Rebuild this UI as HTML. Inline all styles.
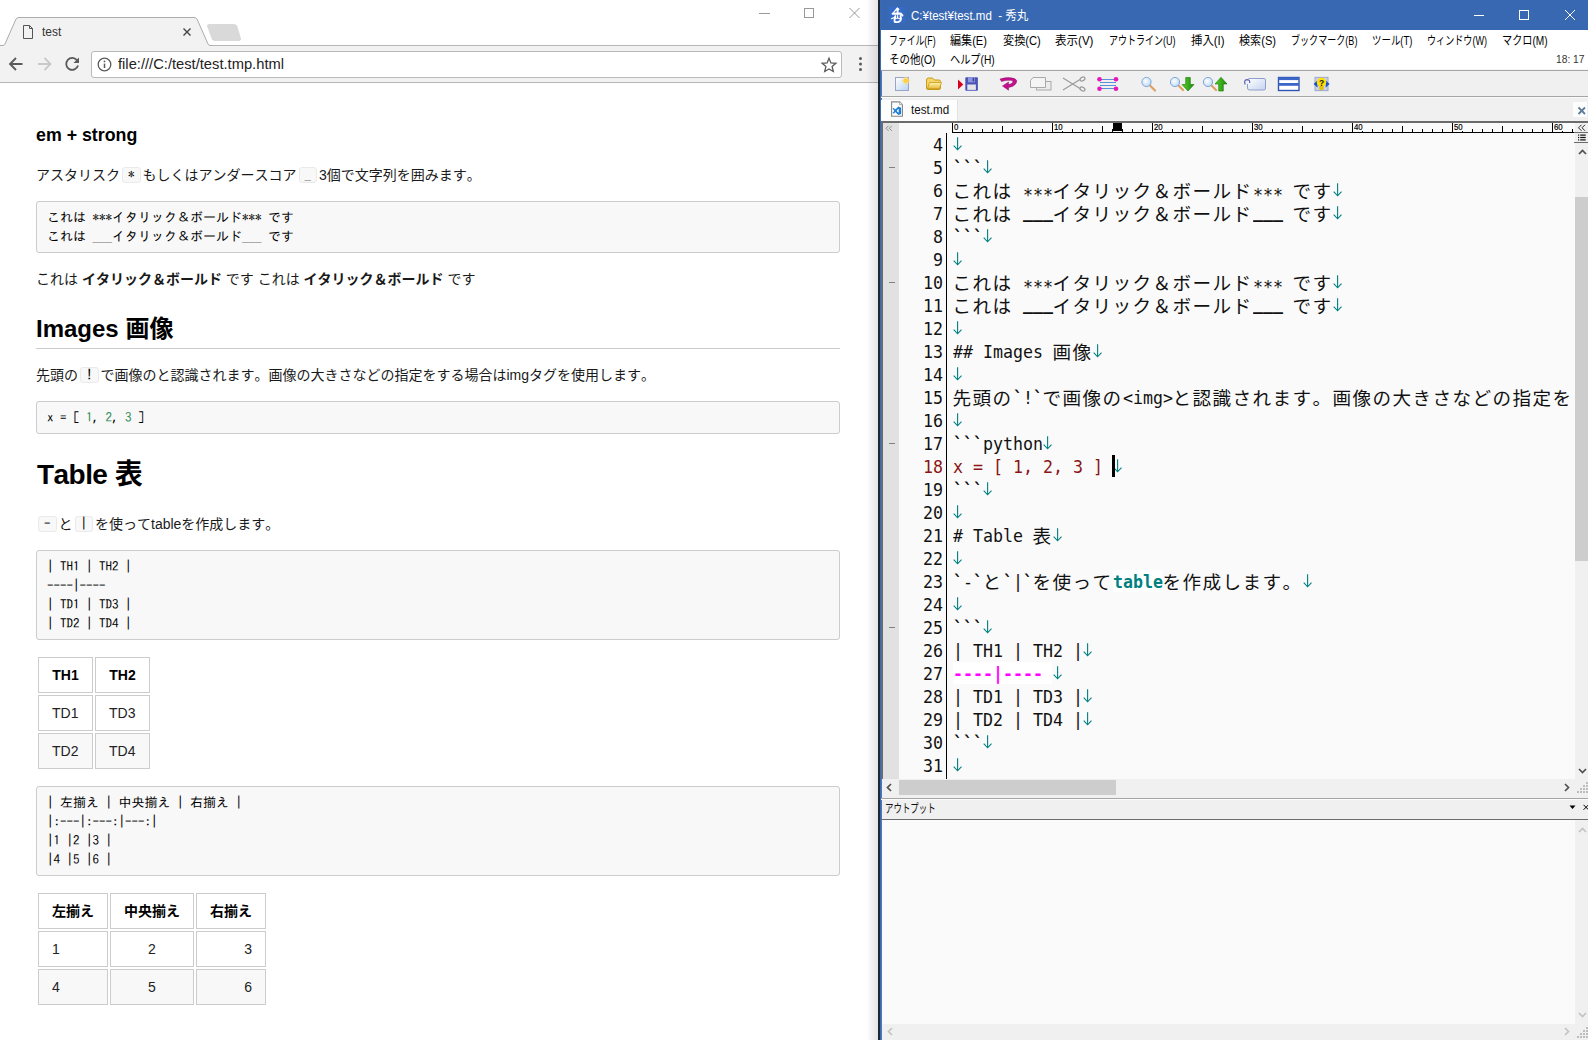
<!DOCTYPE html><html lang="ja"><head><meta charset="utf-8"><title>test</title><style>
*{box-sizing:border-box;margin:0;padding:0}
html,body{width:1588px;height:1040px;overflow:hidden;background:#fff}
body{position:relative;font-family:"Liberation Sans","Noto Sans CJK JP",sans-serif;font-kerning:none;color:#000}
.abs{position:absolute}
.fit{position:absolute;white-space:pre;transform-origin:0 50%}
#chrome{position:absolute;left:0;top:0;width:878px;height:1040px;background:#fff;overflow:hidden}
#tabstrip{position:absolute;left:0;top:0;width:878px;height:46px;background:#fff}
#toolbar{position:absolute;left:0;top:46px;width:878px;height:37px;background:#f2f2f2;border-bottom:1px solid #b6b6b6}
#url{position:absolute;left:91px;top:5px;width:751px;height:27px;background:#fff;border:1px solid #b9b9b9;border-radius:3px}
#page{position:absolute;left:0;top:83px;width:878px;height:957px;background:#fff;font-size:14px;color:#222}
#page .p{position:absolute;left:36px;white-space:nowrap;font-size:14px;line-height:22px;color:#1a1a1a}
#page .h{position:absolute;left:36px;white-space:nowrap;font-weight:bold;color:#000}
#page pre{position:absolute;left:36px;width:804px;background:#f8f8f8;border:1px solid #ccc;border-radius:3px;padding:6px 10px;font-family:"IPAGothic","Noto Sans CJK JP",monospace;font-size:13px;line-height:19px;color:#000;white-space:pre}
#page code{display:inline-block;font-family:"IPAGothic","Noto Sans CJK JP",monospace;font-size:13px;line-height:14px;height:16px;margin:0 2px;padding:0 5px;border:1px solid #eaeaea;background:#f8f8f8;border-radius:3px;vertical-align:1px;color:#000}
#page table{position:absolute;border-collapse:separate;border-spacing:2px;font-size:14px}
#page td,#page th{border:1px solid #ccc;height:36px;padding:0 13px;color:#222;white-space:nowrap}
#page th{font-weight:bold;color:#000}
#page th.j{padding-bottom:2px}
#page tr.alt td{background:#f8f8f8}
.n1{color:#2e8b57}
#hm{position:absolute;left:878px;top:0;width:710px;height:1040px;background:#f0f0f0;overflow:hidden}
#title{position:absolute;left:3px;top:0;width:707px;height:30px;background:#3768b1;color:#fff}
#menu{position:absolute;left:3px;top:30px;width:707px;height:40px;background:#fff;color:#000}
#edtext{position:absolute;overflow:hidden;background:#fafafa}
.ln{position:absolute;height:23px;line-height:23px;white-space:pre;color:#111}
.ln span{position:absolute;top:0;white-space:pre}
.ln .a,.num{font-family:"DejaVu Sans Mono",monospace;font-size:18px}
.ln .a{transform:scaleX(0.9227);transform-origin:0 50%}
.ln .j{font-family:"Noto Sans CJK JP",sans-serif;font-size:18.6px;letter-spacing:1.4px;top:-1px;margin-left:-0.5px}
.ln .ast{position:relative;top:4px}
.ln .us{position:relative;top:-2px;font-weight:bold}
.ln .bt{position:relative;top:0;font-weight:bold}
.num{position:absolute;height:23px;line-height:23px;transform:scaleX(0.9227);transform-origin:100% 50%;text-align:right;color:#111;white-space:pre}
.rl{position:absolute;top:-0.7px;font:9.8px/10px "Liberation Sans",sans-serif;color:#000;transform:scaleX(0.8);transform-origin:0 50%;-webkit-text-stroke:0.2px #000}
</style></head><body>
<div id="chrome">
<div id="tabstrip">
<svg class="abs" style="left:0;top:0" width="878" height="46" viewBox="0 0 878 46">
<path d="M0 45.5H878" stroke="#b6b6b6" stroke-width="1" fill="none"/>
<path d="M2.5 46 L4 45 L16 19 Q17 17.5 19 17.5 L194 17.5 Q196 17.5 197 19 L209 45 L210.5 46 Z" fill="#f2f2f2" stroke="none"/>
<path d="M0 45.5 L3 45.5 Q4.5 45 5 44 L16 19 Q17 17.5 19 17.5 L194 17.5 Q196 17.5 197 19 L208 44 Q208.5 45 210 45.5 L213 45.5" fill="none" stroke="#adadad" stroke-width="1"/>
<path d="M207.5 26 Q207 24.5 209 24.5 L234 24.5 Q236 24.5 236.8 26 L240.5 38.5 Q241 40.5 239 40.5 L215 40.5 Q213 40.5 212.2 39 Z" fill="#d9d9d9" stroke="#cfcfcf" stroke-width="0.6"/>
<path d="M23.5 25.5 H29.5 L32.5 28.5 V38.5 H23.5 Z M29.5 25.5 V28.5 H32.5" fill="none" stroke="#555" stroke-width="1"/>
<path d="M183.5 28.5 L190.5 35.5 M190.5 28.5 L183.5 35.5" stroke="#444" stroke-width="1.4" fill="none"/>
<path d="M759 13.5 H770" stroke="#999" stroke-width="1"/>
<rect x="804.5" y="8.5" width="9" height="9" fill="none" stroke="#999" stroke-width="1"/>
<path d="M849.5 8 L859.5 18 M859.5 8 L849.5 18" stroke="#999" stroke-width="1" fill="none"/>
</svg>
<span class="fit" style="left:42.2px;top:24.0px;font:12.5px 'Liberation Sans',sans-serif;line-height:16px;transform:scaleX(0.9575);color:#333;">test</span>
</div>
<div id="toolbar">
<svg class="abs" style="left:0;top:-1px" width="878" height="37" viewBox="0 0 878 37">
<g fill="none" stroke="#5a5a5a" stroke-width="1.8">
<path d="M22.5 19 H10.5 M16 13 L10 19 L16 25"/>
<path d="M38 19 H50 M44.5 13 L50.5 19 L44.5 25" stroke="#c9c9c9"/>
<path d="M77.2 15.5 A6 6 0 1 0 78 20.5"/>
</g>
<path d="M79 12.5 V18 H73.5 Z" fill="#5a5a5a"/>
</svg>
<div id="url">
<svg class="abs" style="left:4px;top:4px" width="18" height="18" viewBox="0 0 18 18"><circle cx="8.5" cy="8.5" r="6.3" fill="none" stroke="#5a5a5a" stroke-width="1.3"/><path d="M8.5 7.6 V12" stroke="#5a5a5a" stroke-width="1.5"/><circle cx="8.5" cy="5.4" r="0.9" fill="#5a5a5a"/></svg>
<span class="fit" style="left:25.6px;top:3.0px;font:14.5px 'Liberation Sans',sans-serif;line-height:19px;transform:scaleX(1.0148);color:#222;">file:///C:/test/test.tmp.html</span>
<svg class="abs" style="left:727px;top:3px" width="20" height="20" viewBox="0 0 20 20"><path d="M10 3.2 L11.9 7.9 L16.9 8.3 L13.1 11.6 L14.3 16.5 L10 13.9 L5.7 16.5 L6.9 11.6 L3.1 8.3 L8.1 7.9 Z" fill="none" stroke="#5a5a5a" stroke-width="1.3" stroke-linejoin="miter"/></svg>
</div>
<svg class="abs" style="left:852px;top:7px" width="16" height="22" viewBox="0 0 16 22"><circle cx="8.5" cy="5.5" r="1.5" fill="#5a5a5a"/><circle cx="8.5" cy="11" r="1.5" fill="#5a5a5a"/><circle cx="8.5" cy="16.5" r="1.5" fill="#5a5a5a"/></svg>
</div>
<div id="page">
<div class="h" style="top:40px;font-size:17.8px;line-height:24px">em + strong</div>
<div class="p" style="top:81px">アスタリスク<code>*</code>もしくはアンダースコア<code>_</code>3個で文字列を囲みます。</div>
<pre style="top:118px;height:52px">これは ***イタリック＆ボールド*** です
これは ___イタリック＆ボールド___ です</pre>
<div class="p" style="top:185px">これは <b>イタリック＆ボールド</b> です これは <b>イタリック＆ボールド</b> です</div>
<div class="h" style="top:229px;font-size:24px;line-height:34px;width:804px;border-bottom:1px solid #ccc;height:37px">Images 画像</div>
<div class="p" style="top:281px">先頭の<code>!</code>で画像のと認識されます。画像の大きさなどの指定をする場合はimgタグを使用します。</div>
<pre style="top:318px;height:33px">x = [ <span class="n1">1</span>, <span class="n1">2</span>, <span class="n1">3</span> ]</pre>
<div class="h" style="top:372px;font-size:28px;line-height:40px;left:37px"><span style="letter-spacing:-0.55px">Table </span>表</div>
<div class="p" style="top:430px"><code>-</code>と<code>|</code>を使ってtableを作成します。</div>
<pre style="top:467px;height:90px">| TH1 | TH2 |
----|----
| TD1 | TD3 |
| TD2 | TD4 |</pre>
<table style="left:36px;top:572px"><tr><th style="width:55px">TH1</th><th style="width:55px">TH2</th></tr><tr><td>TD1</td><td>TD3</td></tr><tr class="alt"><td>TD2</td><td>TD4</td></tr></table>
<pre style="top:703px;height:90px">| 左揃え | 中央揃え | 右揃え |
|:---|:---:|---:|
|1 |2 |3 |
|4 |5 |6 |</pre>
<table style="left:36px;top:808px"><tr><th class="j" style="width:70px">左揃え</th><th class="j" style="width:84px">中央揃え</th><th class="j" style="width:70px">右揃え</th></tr><tr><td>1</td><td style="text-align:center">2</td><td style="text-align:right">3</td></tr><tr class="alt"><td>4</td><td style="text-align:center">5</td><td style="text-align:right">6</td></tr></table>
</div>
<div class="abs" style="left:866px;top:0;width:12px;height:1040px;background:linear-gradient(to right,rgba(0,0,0,0),rgba(0,0,0,0.10))"></div>
</div>
<div id="hm">
<div class="abs" style="left:0;top:0;width:2px;height:1040px;background:#1c2836"></div>
<div class="abs" style="left:2px;top:0;width:1px;height:1040px;background:#3a6ab4"></div><div class="abs" style="left:3px;top:0;width:1px;height:1040px;background:#4f78b8"></div>
<div id="title">
<svg class="abs" style="left:0;top:0" width="707" height="30" viewBox="0 0 707 30">
<rect x="7.9" y="7" width="16" height="16" fill="#356bc8"/>
<g stroke="#fff" fill="none" stroke-linecap="round" stroke-linejoin="round"><path d="M16.4 8.2 L17.6 9.4 L15.6 9.8 Z" stroke-width="1.6" fill="#fff"/><path d="M15.6 9 L12 13.4" stroke-width="1.2"/><path d="M11.6 13.8 L19.6 13.4 L21.4 15.4" stroke-width="2"/><path d="M16.6 9 V13.5" stroke-width="1.8"/><path d="M16.6 15.5 V18" stroke-width="1.1"/><path d="M10.6 18.6 Q13 18 14.6 16.4" stroke-width="1.1"/><path d="M14.4 16 Q13.2 19 13.6 21.6" stroke-width="1.8"/><path d="M14 22 Q17.5 22.6 19.4 20.6 Q20.4 18.6 19.6 16" stroke-width="1.9"/><path d="M14.2 18.6 Q16.8 17.4 18.6 18.6" stroke-width="1.2"/></g>
<g stroke="#fff" stroke-width="1" fill="none"><path d="M593 15.5 H603"/><rect x="638.5" y="10.5" width="9" height="9"/><path d="M684 10 L694 20 M694 10 L684 20"/></g>
</svg>
<span class="fit" style="left:29.5px;top:8.0px;font:12.4px 'Liberation Sans','Noto Sans CJK JP',sans-serif;line-height:16px;transform:scaleX(0.9316);color:#fff;">C:¥test¥test.md  - 秀丸</span>
</div>
<div id="menu">
<span class="fit" style="left:7.7px;top:3.0px;font:12px 'Liberation Sans','Noto Sans CJK JP',sans-serif;line-height:16px;transform:scaleX(0.7358);">ファイル(F)</span>
<span class="fit" style="left:69.4px;top:3.0px;font:12px 'Liberation Sans','Noto Sans CJK JP',sans-serif;line-height:16px;transform:scaleX(0.9225);">編集(E)</span>
<span class="fit" style="left:121.7px;top:3.0px;font:12px 'Liberation Sans','Noto Sans CJK JP',sans-serif;line-height:16px;transform:scaleX(0.9294);">変換(C)</span>
<span class="fit" style="left:174.0px;top:3.0px;font:12px 'Liberation Sans','Noto Sans CJK JP',sans-serif;line-height:16px;transform:scaleX(0.9600);">表示(V)</span>
<span class="fit" style="left:227.8px;top:3.0px;font:12px 'Liberation Sans','Noto Sans CJK JP',sans-serif;line-height:16px;transform:scaleX(0.7511);">アウトライン(U)</span>
<span class="fit" style="left:309.8px;top:3.0px;font:12px 'Liberation Sans','Noto Sans CJK JP',sans-serif;line-height:16px;transform:scaleX(0.9483);">挿入(I)</span>
<span class="fit" style="left:358.3px;top:3.0px;font:12px 'Liberation Sans','Noto Sans CJK JP',sans-serif;line-height:16px;transform:scaleX(0.9250);">検索(S)</span>
<span class="fit" style="left:410.2px;top:3.0px;font:12px 'Liberation Sans','Noto Sans CJK JP',sans-serif;line-height:16px;transform:scaleX(0.7545);">ブックマーク(B)</span>
<span class="fit" style="left:491.1px;top:3.0px;font:12px 'Liberation Sans','Noto Sans CJK JP',sans-serif;line-height:16px;transform:scaleX(0.7871);">ツール(T)</span>
<span class="fit" style="left:546.4px;top:3.0px;font:12px 'Liberation Sans','Noto Sans CJK JP',sans-serif;line-height:16px;transform:scaleX(0.7576);">ウィンドウ(W)</span>
<span class="fit" style="left:621.0px;top:3.0px;font:12px 'Liberation Sans','Noto Sans CJK JP',sans-serif;line-height:16px;transform:scaleX(0.8444);">マクロ(M)</span>
<span class="fit" style="left:7.7px;top:21.5px;font:12px 'Liberation Sans','Noto Sans CJK JP',sans-serif;line-height:16px;transform:scaleX(0.8738);">その他(O)</span>
<span class="fit" style="left:69.4px;top:21.5px;font:12px 'Liberation Sans','Noto Sans CJK JP',sans-serif;line-height:16px;transform:scaleX(0.8487);">ヘルプ(H)</span>
<span class="fit" style="left:675.4px;top:21.0px;font:11px 'Liberation Sans',sans-serif;line-height:16px;transform:scaleX(0.9316);color:#333;">18: 17</span>
</div>
<div class="abs" style="left:3px;top:69px;width:707px;height:1px;background:#f6f6f6"></div>
<div class="abs" style="left:3px;top:70px;width:707px;height:1px;background:#a5a5a5"></div>
<div class="abs" style="left:3px;top:96px;width:707px;height:1px;background:#a5a5a5"></div>
<div class="abs" style="left:3px;top:97px;width:707px;height:1px;background:#fafafa"></div>
<svg class="abs" style="left:3px;top:71px" width="707" height="25" viewBox="881 71 707 25">
<defs>
<linearGradient id="gpage" x1="0" y1="0" x2="1" y2="1"><stop offset="0" stop-color="#ffffff"/><stop offset="1" stop-color="#b9d3f3"/></linearGradient>
<linearGradient id="gfold" x1="0" y1="0" x2="0" y2="1"><stop offset="0" stop-color="#fff3b0"/><stop offset="1" stop-color="#e9bc3a"/></linearGradient>
<radialGradient id="glens" cx="0.4" cy="0.4" r="0.7"><stop offset="0" stop-color="#ffffff"/><stop offset="1" stop-color="#b5d4f5"/></radialGradient>
<linearGradient id="ggreen" x1="0" y1="0" x2="1" y2="0"><stop offset="0" stop-color="#5fd02a"/><stop offset="1" stop-color="#178a0a"/></linearGradient>
<linearGradient id="gtag" x1="0" y1="0" x2="1" y2="1"><stop offset="0" stop-color="#ffffff"/><stop offset="1" stop-color="#c3d3f0"/></linearGradient>
</defs>
<!-- 1 new doc -->
<rect x="895.5" y="77.5" width="13" height="13" fill="url(#gpage)" stroke="#9aa3c8" stroke-width="1"/>
<circle cx="905.8" cy="80.6" r="3.6" fill="#ffe27a" opacity="0.55"/><circle cx="905.8" cy="80.6" r="2.2" fill="#ffc92e"/>
<path d="M905.8 76.8 V84.4 M902 80.6 H909.6" stroke="#ffd450" stroke-width="0.8" fill="none" opacity="0.8"/>
<!-- 2 folder -->
<path d="M926.5 80 Q926.5 78 928.5 78 H932.5 L934.5 80 H939 Q940.5 80 940.5 81.5 V88 Q940.5 89.5 939 89.5 H928 Q926.5 89.5 926.5 88 Z" fill="#f5d56a" stroke="#c89a1c" stroke-width="1"/>
<path d="M927.5 88.5 L929.5 82.5 H941.5 L939.5 88.5 Z" fill="url(#gfold)" stroke="#c89a1c" stroke-width="0.8"/>
<!-- 3 save -->
<path d="M958 79.5 L963.3 84.5 L958 89.5 Z" fill="#d8001c"/>
<rect x="965.3" y="77.3" width="12.6" height="13.4" rx="1" fill="#4b52b8"/>
<rect x="968" y="77.3" width="7" height="5" fill="#8f97dc"/><rect x="972.6" y="78" width="1.6" height="3.4" fill="#3a409c"/>
<rect x="967.3" y="84.5" width="8.6" height="5.4" fill="#e4e4e8"/>
<!-- 4 redo magenta -->
<path d="M1000 79 Q1008 76.5 1014.5 78.5 Q1018 80 1016 83.5 Q1013.5 87 1008.5 87.5 L1008.5 90.2 L1002.5 86 L1008.5 82 L1008.5 84.6 Q1011.5 84.2 1012.8 82.3 Q1013.5 80.6 1011 80.3 Q1006 79.8 1001.5 81.5 Z" fill="#c4108e" stroke="#8e0a66" stroke-width="0.5"/>
<!-- 5 copy pages -->
<rect x="1036.5" y="81.5" width="14.5" height="8.5" fill="#ececec" stroke="#a9a9a9" stroke-width="1"/>
<path d="M1030.5 80.5 L1033 77.5 H1045.5 V87.5 H1030.5 Z" fill="#f4f4f4" stroke="#a9a9a9" stroke-width="1"/>
<!-- 6 scissors -->
<g fill="none" stroke="#9a9a9a" stroke-width="1.2"><path d="M1063 78 L1080 88.5 M1063 90 L1080 79.5"/><ellipse cx="1082.5" cy="79" rx="2.6" ry="1.8" transform="rotate(-30 1082.5 79)"/><ellipse cx="1082.5" cy="89" rx="2.6" ry="1.8" transform="rotate(30 1082.5 89)"/></g>
<!-- 7 pink dots -->
<g stroke="#5b8fd6" stroke-width="1"><path d="M1100 79.5 H1116 M1100 82.5 H1116 M1100 85.5 H1116 M1100 88.5 H1116"/></g>
<g fill="#e815b8"><circle cx="1099.5" cy="79.3" r="2.3"/><circle cx="1116" cy="79.3" r="2.3"/><circle cx="1099.5" cy="88.7" r="2.3"/><circle cx="1116" cy="88.7" r="2.3"/></g>
<!-- 8 magnifier -->
<g id="mag1"><path d="M1150 85.5 L1155 90.5" stroke="#e0a060" stroke-width="2.2" stroke-linecap="round"/><circle cx="1146.5" cy="82" r="4.6" fill="url(#glens)" stroke="#7fa6d9" stroke-width="1"/></g>
<!-- 9 magnifier + down -->
<path d="M1178.5 85.5 L1183 90" stroke="#e0a060" stroke-width="2.2" stroke-linecap="round"/><circle cx="1175" cy="82" r="4.6" fill="url(#glens)" stroke="#7fa6d9" stroke-width="1"/>
<path d="M1185.7 77.5 H1190.3 V84.5 H1194 L1188 91 L1182 84.5 H1185.7 Z" fill="url(#ggreen)" stroke="#137506" stroke-width="0.6"/>
<!-- 10 magnifier + up -->
<path d="M1211.5 85.5 L1216 90" stroke="#e0a060" stroke-width="2.2" stroke-linecap="round"/><circle cx="1208" cy="82" r="4.6" fill="url(#glens)" stroke="#7fa6d9" stroke-width="1"/>
<path d="M1218.7 91 H1223.3 V84 H1227 L1221 77.3 L1215 84 H1218.7 Z" fill="url(#ggreen)" stroke="#137506" stroke-width="0.6"/>
<!-- 11 tag -->
<path d="M1248.5 78.5 H1264 Q1265.5 78.5 1265.5 80 V88 Q1265.5 90 1264 90 H1249.5 Q1247.5 90 1247.5 88 V84" fill="url(#gtag)" stroke="#8f9fcc" stroke-width="1"/>
<path d="M1245.2 84.5 Q1243.5 80 1247 79.6 Q1250.2 79.6 1249.6 83" fill="none" stroke="#5c63b8" stroke-width="1.2"/>
<!-- 12 split window -->
<rect x="1278.5" y="77.5" width="20.5" height="13" fill="#ffffff" stroke="#2f55b4" stroke-width="1.4"/>
<rect x="1278.5" y="77.5" width="20.5" height="2.6" fill="#3c66c8"/><rect x="1278.5" y="83" width="20.5" height="2.8" fill="#3c66c8"/>
<!-- 13 help -->
<rect x="1315" y="77.3" width="13" height="13.4" fill="#c9d3ea" stroke="#8d9ac4" stroke-width="0.8"/>
<path d="M1313.6 84 L1317.5 80.4 V87.6 Z M1329.6 84 L1325.7 80.4 V87.6 Z" fill="#1a4fd0"/>
<circle cx="1321.5" cy="82.4" r="4.7" fill="#ffe000"/><text x="1321.5" y="86" font-family="Liberation Sans,sans-serif" font-weight="bold" font-size="8.5" text-anchor="middle" fill="#222">?</text><rect x="1319.3" y="86" width="4.4" height="4" rx="1" fill="#e2c200"/>
</svg>

<div class="abs" style="left:3px;top:100px;width:77px;height:21px;background:#fdfdfd;border-right:1px solid #e2e2e2"></div>
<svg class="abs" style="left:12px;top:100px" width="16" height="20" viewBox="0 0 16 20"><path d="M1.6 1.9 H9.6 L12.4 4.7 V16.3 H1.6 Z" fill="#fff" stroke="#858585" stroke-width="1.1"/><path d="M9.6 1.9 V4.7 H12.4" fill="#f4f4f4" stroke="#9a9a9a" stroke-width="0.8"/><path d="M8.4 6.5 L11.1 7.7 V13.9 L8.4 15.1 L4.0 10.8 Z M8.7 8.8 L6.3 10.8 L8.7 12.8 Z" fill="#1e7fd6" fill-rule="evenodd"/><path d="M3.5 8.8 L6 11 M3.5 12.8 L6 10.6" stroke="#1e7fd6" stroke-width="1.5" stroke-linecap="round" fill="none"/></svg>
<span class="fit" style="left:33.4px;top:102.0px;font:12px 'Liberation Sans','Noto Sans CJK JP',sans-serif;line-height:16px;transform:scaleX(0.9680);color:#111;">test.md</span>
<div class="abs" style="left:695px;top:102px;width:14px;height:15px;background:#fdfdfd"></div>
<svg class="abs" style="left:699px;top:106px" width="10" height="10" viewBox="0 0 10 10"><path d="M1.5 1.5 L8 8 M8 1.5 L1.5 8" stroke="#5f7d99" stroke-width="1.8" fill="none"/></svg>
<div class="abs" style="left:3px;top:121px;width:707px;height:2px;background:#6b6b6b"></div>
<div class="abs" style="left:3px;top:121px;width:1px;height:658px;background:#5f6f8a"></div><div class="abs" style="left:4px;top:121px;width:1px;height:658px;background:#6b6b6b"></div>
<div id="edtext" style="left:5px;top:123px;width:692px;height:656px">
<div class="abs" style="left:0;top:0;width:16px;height:656px;background:#e1e1e1"></div>
<div class="abs" style="left:63px;top:10px;width:1px;height:650px;background:#000"></div>
<svg class="abs" style="left:1.5px;top:1.5px" width="10" height="8" viewBox="0 0 10 8"><path d="M3.5 0.8 L1 3.3 L3.5 5.8 M6.8 0.8 L4.3 3.3 L6.8 5.8" fill="none" stroke="#777" stroke-width="0.8"/></svg>
<svg class="abs" style="left:68px;top:0" width="624" height="10" viewBox="0 0 624 10" shape-rendering="crispEdges"><rect x="1" y="8.7" width="623" height="1.3" fill="#000"/><rect x="1" y="0" width="1" height="10" fill="#000"/><rect x="11" y="6" width="1" height="3" fill="#000"/><rect x="21" y="6" width="1" height="3" fill="#000"/><rect x="31" y="6" width="1" height="3" fill="#000"/><rect x="41" y="6" width="1" height="3" fill="#000"/><rect x="51" y="3" width="1" height="6" fill="#000"/><rect x="61" y="6" width="1" height="3" fill="#000"/><rect x="71" y="6" width="1" height="3" fill="#000"/><rect x="81" y="6" width="1" height="3" fill="#000"/><rect x="91" y="6" width="1" height="3" fill="#000"/><rect x="101" y="0" width="1" height="9" fill="#000"/><rect x="111" y="6" width="1" height="3" fill="#000"/><rect x="121" y="6" width="1" height="3" fill="#000"/><rect x="131" y="6" width="1" height="3" fill="#000"/><rect x="141" y="6" width="1" height="3" fill="#000"/><rect x="151" y="3" width="1" height="6" fill="#000"/><rect x="161" y="6" width="1" height="3" fill="#000"/><rect x="171" y="6" width="1" height="3" fill="#000"/><rect x="181" y="6" width="1" height="3" fill="#000"/><rect x="191" y="6" width="1" height="3" fill="#000"/><rect x="201" y="0" width="1" height="9" fill="#000"/><rect x="211" y="6" width="1" height="3" fill="#000"/><rect x="221" y="6" width="1" height="3" fill="#000"/><rect x="231" y="6" width="1" height="3" fill="#000"/><rect x="241" y="6" width="1" height="3" fill="#000"/><rect x="251" y="3" width="1" height="6" fill="#000"/><rect x="261" y="6" width="1" height="3" fill="#000"/><rect x="271" y="6" width="1" height="3" fill="#000"/><rect x="281" y="6" width="1" height="3" fill="#000"/><rect x="291" y="6" width="1" height="3" fill="#000"/><rect x="301" y="0" width="1" height="9" fill="#000"/><rect x="311" y="6" width="1" height="3" fill="#000"/><rect x="321" y="6" width="1" height="3" fill="#000"/><rect x="331" y="6" width="1" height="3" fill="#000"/><rect x="341" y="6" width="1" height="3" fill="#000"/><rect x="351" y="3" width="1" height="6" fill="#000"/><rect x="361" y="6" width="1" height="3" fill="#000"/><rect x="371" y="6" width="1" height="3" fill="#000"/><rect x="381" y="6" width="1" height="3" fill="#000"/><rect x="391" y="6" width="1" height="3" fill="#000"/><rect x="401" y="0" width="1" height="9" fill="#000"/><rect x="411" y="6" width="1" height="3" fill="#000"/><rect x="421" y="6" width="1" height="3" fill="#000"/><rect x="431" y="6" width="1" height="3" fill="#000"/><rect x="441" y="6" width="1" height="3" fill="#000"/><rect x="451" y="3" width="1" height="6" fill="#000"/><rect x="461" y="6" width="1" height="3" fill="#000"/><rect x="471" y="6" width="1" height="3" fill="#000"/><rect x="481" y="6" width="1" height="3" fill="#000"/><rect x="491" y="6" width="1" height="3" fill="#000"/><rect x="501" y="0" width="1" height="9" fill="#000"/><rect x="511" y="6" width="1" height="3" fill="#000"/><rect x="521" y="6" width="1" height="3" fill="#000"/><rect x="531" y="6" width="1" height="3" fill="#000"/><rect x="541" y="6" width="1" height="3" fill="#000"/><rect x="551" y="3" width="1" height="6" fill="#000"/><rect x="561" y="6" width="1" height="3" fill="#000"/><rect x="571" y="6" width="1" height="3" fill="#000"/><rect x="581" y="6" width="1" height="3" fill="#000"/><rect x="591" y="6" width="1" height="3" fill="#000"/><rect x="601" y="0" width="1" height="9" fill="#000"/><rect x="611" y="6" width="1" height="3" fill="#000"/><rect x="621" y="6" width="1" height="3" fill="#000"/></svg>
<span class="rl" style="left:70.7px">0</span>
<div class="abs" style="left:170px;top:0;width:10px;height:8px;background:#fafafa"></div>
<span class="rl" style="left:170.7px">10</span>
<div class="abs" style="left:270px;top:0;width:10px;height:8px;background:#fafafa"></div>
<span class="rl" style="left:270.7px">20</span>
<div class="abs" style="left:370px;top:0;width:10px;height:8px;background:#fafafa"></div>
<span class="rl" style="left:370.7px">30</span>
<div class="abs" style="left:470px;top:0;width:10px;height:8px;background:#fafafa"></div>
<span class="rl" style="left:470.7px">40</span>
<div class="abs" style="left:570px;top:0;width:10px;height:8px;background:#fafafa"></div>
<span class="rl" style="left:570.7px">50</span>
<div class="abs" style="left:670px;top:0;width:10px;height:8px;background:#fafafa"></div>
<span class="rl" style="left:670.7px">60</span>
<div class="abs" style="left:230px;top:0;width:9px;height:8px;background:#000"></div>
<div class="num" style="left:0px;top:10px;width:60px;color:#111">4</div>
<div class="ln" style="left:70px;top:10px;width:640px"><svg class="abs" style="left:0px;top:4px" width="10" height="14" viewBox="0 0 10 14"><path d="M4.6 0.3 V12.6 M0.7 8.6 L4.6 12.8 L8.5 8.6" fill="none" stroke="#008080" stroke-width="1.1"/></svg></div>
<div class="num" style="left:0px;top:33px;width:60px;color:#111">5</div>
<div class="abs" style="left:6px;top:44px;width:6px;height:1px;background:#808080"></div>
<div class="ln" style="left:70px;top:33px;width:640px"><span class="a" style="left:0px"><span class="bt">```</span></span><svg class="abs" style="left:30px;top:4px" width="10" height="14" viewBox="0 0 10 14"><path d="M4.6 0.3 V12.6 M0.7 8.6 L4.6 12.8 L8.5 8.6" fill="none" stroke="#008080" stroke-width="1.1"/></svg></div>
<div class="num" style="left:0px;top:56px;width:60px;color:#111">6</div>
<div class="ln" style="left:70px;top:56px;width:640px"><span class="j" style="left:0px">これは</span><span class="a" style="left:60px"> <span class="ast">***</span></span><span class="j" style="left:100px">イタリック＆ボールド</span><span class="a" style="left:300px"><span class="ast">***</span> </span><span class="j" style="left:340px">です</span><svg class="abs" style="left:380px;top:4px" width="10" height="14" viewBox="0 0 10 14"><path d="M4.6 0.3 V12.6 M0.7 8.6 L4.6 12.8 L8.5 8.6" fill="none" stroke="#008080" stroke-width="1.1"/></svg></div>
<div class="num" style="left:0px;top:79px;width:60px;color:#111">7</div>
<div class="ln" style="left:70px;top:79px;width:640px"><span class="j" style="left:0px">これは</span><span class="a" style="left:60px"> <span class="us">___</span></span><span class="j" style="left:100px">イタリック＆ボールド</span><span class="a" style="left:300px"><span class="us">___</span> </span><span class="j" style="left:340px">です</span><svg class="abs" style="left:380px;top:4px" width="10" height="14" viewBox="0 0 10 14"><path d="M4.6 0.3 V12.6 M0.7 8.6 L4.6 12.8 L8.5 8.6" fill="none" stroke="#008080" stroke-width="1.1"/></svg></div>
<div class="num" style="left:0px;top:102px;width:60px;color:#111">8</div>
<div class="ln" style="left:70px;top:102px;width:640px"><span class="a" style="left:0px"><span class="bt">```</span></span><svg class="abs" style="left:30px;top:4px" width="10" height="14" viewBox="0 0 10 14"><path d="M4.6 0.3 V12.6 M0.7 8.6 L4.6 12.8 L8.5 8.6" fill="none" stroke="#008080" stroke-width="1.1"/></svg></div>
<div class="num" style="left:0px;top:125px;width:60px;color:#111">9</div>
<div class="ln" style="left:70px;top:125px;width:640px"><svg class="abs" style="left:0px;top:4px" width="10" height="14" viewBox="0 0 10 14"><path d="M4.6 0.3 V12.6 M0.7 8.6 L4.6 12.8 L8.5 8.6" fill="none" stroke="#008080" stroke-width="1.1"/></svg></div>
<div class="num" style="left:0px;top:148px;width:60px;color:#111">10</div>
<div class="abs" style="left:6px;top:159px;width:6px;height:1px;background:#808080"></div>
<div class="ln" style="left:70px;top:148px;width:640px"><span class="j" style="left:0px">これは</span><span class="a" style="left:60px"> <span class="ast">***</span></span><span class="j" style="left:100px">イタリック＆ボールド</span><span class="a" style="left:300px"><span class="ast">***</span> </span><span class="j" style="left:340px">です</span><svg class="abs" style="left:380px;top:4px" width="10" height="14" viewBox="0 0 10 14"><path d="M4.6 0.3 V12.6 M0.7 8.6 L4.6 12.8 L8.5 8.6" fill="none" stroke="#008080" stroke-width="1.1"/></svg></div>
<div class="num" style="left:0px;top:171px;width:60px;color:#111">11</div>
<div class="ln" style="left:70px;top:171px;width:640px"><span class="j" style="left:0px">これは</span><span class="a" style="left:60px"> <span class="us">___</span></span><span class="j" style="left:100px">イタリック＆ボールド</span><span class="a" style="left:300px"><span class="us">___</span> </span><span class="j" style="left:340px">です</span><svg class="abs" style="left:380px;top:4px" width="10" height="14" viewBox="0 0 10 14"><path d="M4.6 0.3 V12.6 M0.7 8.6 L4.6 12.8 L8.5 8.6" fill="none" stroke="#008080" stroke-width="1.1"/></svg></div>
<div class="num" style="left:0px;top:194px;width:60px;color:#111">12</div>
<div class="ln" style="left:70px;top:194px;width:640px"><svg class="abs" style="left:0px;top:4px" width="10" height="14" viewBox="0 0 10 14"><path d="M4.6 0.3 V12.6 M0.7 8.6 L4.6 12.8 L8.5 8.6" fill="none" stroke="#008080" stroke-width="1.1"/></svg></div>
<div class="num" style="left:0px;top:217px;width:60px;color:#111">13</div>
<div class="ln" style="left:70px;top:217px;width:640px"><span class="a" style="left:0px">## Images </span><span class="j" style="left:100px">画像</span><svg class="abs" style="left:140px;top:4px" width="10" height="14" viewBox="0 0 10 14"><path d="M4.6 0.3 V12.6 M0.7 8.6 L4.6 12.8 L8.5 8.6" fill="none" stroke="#008080" stroke-width="1.1"/></svg></div>
<div class="num" style="left:0px;top:240px;width:60px;color:#111">14</div>
<div class="ln" style="left:70px;top:240px;width:640px"><svg class="abs" style="left:0px;top:4px" width="10" height="14" viewBox="0 0 10 14"><path d="M4.6 0.3 V12.6 M0.7 8.6 L4.6 12.8 L8.5 8.6" fill="none" stroke="#008080" stroke-width="1.1"/></svg></div>
<div class="num" style="left:0px;top:263px;width:60px;color:#111">15</div>
<div class="ln" style="left:70px;top:263px;width:640px"><span class="j" style="left:0px">先頭の</span><span class="a" style="left:60px"><span class="bt">`</span>!<span class="bt">`</span></span><span class="j" style="left:90px">で画像の</span><span class="a" style="left:170px">&lt;img&gt;</span><span class="j" style="left:220px">と認識されます。画像の大きさなどの指定を</span></div>
<div class="num" style="left:0px;top:286px;width:60px;color:#111">16</div>
<div class="ln" style="left:70px;top:286px;width:640px"><svg class="abs" style="left:0px;top:4px" width="10" height="14" viewBox="0 0 10 14"><path d="M4.6 0.3 V12.6 M0.7 8.6 L4.6 12.8 L8.5 8.6" fill="none" stroke="#008080" stroke-width="1.1"/></svg></div>
<div class="num" style="left:0px;top:309px;width:60px;color:#111">17</div>
<div class="abs" style="left:6px;top:320px;width:6px;height:1px;background:#808080"></div>
<div class="ln" style="left:70px;top:309px;width:640px"><span class="a" style="left:0px"><span class="bt">```</span>python</span><svg class="abs" style="left:90px;top:4px" width="10" height="14" viewBox="0 0 10 14"><path d="M4.6 0.3 V12.6 M0.7 8.6 L4.6 12.8 L8.5 8.6" fill="none" stroke="#008080" stroke-width="1.1"/></svg></div>
<div class="num" style="left:0px;top:332px;width:60px;color:#8b1414">18</div>
<div class="ln" style="left:70px;top:332px;width:640px;color:#8b1414"><span class="a" style="left:0px">x = [ 1, 2, 3 ] </span><svg class="abs" style="left:160px;top:4px" width="10" height="14" viewBox="0 0 10 14"><path d="M4.6 0.3 V12.6 M0.7 8.6 L4.6 12.8 L8.5 8.6" fill="none" stroke="#008080" stroke-width="1.1"/></svg></div>
<div class="num" style="left:0px;top:355px;width:60px;color:#111">19</div>
<div class="ln" style="left:70px;top:355px;width:640px"><span class="a" style="left:0px"><span class="bt">```</span></span><svg class="abs" style="left:30px;top:4px" width="10" height="14" viewBox="0 0 10 14"><path d="M4.6 0.3 V12.6 M0.7 8.6 L4.6 12.8 L8.5 8.6" fill="none" stroke="#008080" stroke-width="1.1"/></svg></div>
<div class="num" style="left:0px;top:378px;width:60px;color:#111">20</div>
<div class="ln" style="left:70px;top:378px;width:640px"><svg class="abs" style="left:0px;top:4px" width="10" height="14" viewBox="0 0 10 14"><path d="M4.6 0.3 V12.6 M0.7 8.6 L4.6 12.8 L8.5 8.6" fill="none" stroke="#008080" stroke-width="1.1"/></svg></div>
<div class="num" style="left:0px;top:401px;width:60px;color:#111">21</div>
<div class="ln" style="left:70px;top:401px;width:640px"><span class="a" style="left:0px"># Table </span><span class="j" style="left:80px">表</span><svg class="abs" style="left:100px;top:4px" width="10" height="14" viewBox="0 0 10 14"><path d="M4.6 0.3 V12.6 M0.7 8.6 L4.6 12.8 L8.5 8.6" fill="none" stroke="#008080" stroke-width="1.1"/></svg></div>
<div class="num" style="left:0px;top:424px;width:60px;color:#111">22</div>
<div class="ln" style="left:70px;top:424px;width:640px"><svg class="abs" style="left:0px;top:4px" width="10" height="14" viewBox="0 0 10 14"><path d="M4.6 0.3 V12.6 M0.7 8.6 L4.6 12.8 L8.5 8.6" fill="none" stroke="#008080" stroke-width="1.1"/></svg></div>
<div class="num" style="left:0px;top:447px;width:60px;color:#111">23</div>
<div class="ln" style="left:70px;top:447px;width:640px"><span class="a" style="left:0px"><span class="bt">`</span>-<span class="bt">`</span></span><span class="j" style="left:30px">と</span><span class="a" style="left:50px"><span class="bt">`</span>|<span class="bt">`</span></span><span class="j" style="left:80px">を使って</span><span class="abs" style="left:160px;top:0;width:50px;height:22px;background:#fff"></span><span class="a" style="left:160px;color:#008080;font-weight:bold">table</span><span class="j" style="left:210px">を作成します。</span><svg class="abs" style="left:350px;top:4px" width="10" height="14" viewBox="0 0 10 14"><path d="M4.6 0.3 V12.6 M0.7 8.6 L4.6 12.8 L8.5 8.6" fill="none" stroke="#008080" stroke-width="1.1"/></svg></div>
<div class="num" style="left:0px;top:470px;width:60px;color:#111">24</div>
<div class="ln" style="left:70px;top:470px;width:640px"><svg class="abs" style="left:0px;top:4px" width="10" height="14" viewBox="0 0 10 14"><path d="M4.6 0.3 V12.6 M0.7 8.6 L4.6 12.8 L8.5 8.6" fill="none" stroke="#008080" stroke-width="1.1"/></svg></div>
<div class="num" style="left:0px;top:493px;width:60px;color:#111">25</div>
<div class="abs" style="left:6px;top:504px;width:6px;height:1px;background:#808080"></div>
<div class="ln" style="left:70px;top:493px;width:640px"><span class="a" style="left:0px"><span class="bt">```</span></span><svg class="abs" style="left:30px;top:4px" width="10" height="14" viewBox="0 0 10 14"><path d="M4.6 0.3 V12.6 M0.7 8.6 L4.6 12.8 L8.5 8.6" fill="none" stroke="#008080" stroke-width="1.1"/></svg></div>
<div class="num" style="left:0px;top:516px;width:60px;color:#111">26</div>
<div class="ln" style="left:70px;top:516px;width:640px"><span class="a" style="left:0px">| TH1 | TH2 |</span><svg class="abs" style="left:130px;top:4px" width="10" height="14" viewBox="0 0 10 14"><path d="M4.6 0.3 V12.6 M0.7 8.6 L4.6 12.8 L8.5 8.6" fill="none" stroke="#008080" stroke-width="1.1"/></svg></div>
<div class="num" style="left:0px;top:539px;width:60px;color:#111">27</div>
<div class="ln" style="left:70px;top:539px;width:640px"><span class="abs" style="left:0px;top:0;width:99px;height:22px;background:#fff"></span><span class="a" style="left:0px;color:#ff00ff;font-weight:bold">----|---- </span><svg class="abs" style="left:100px;top:4px" width="10" height="14" viewBox="0 0 10 14"><path d="M4.6 0.3 V12.6 M0.7 8.6 L4.6 12.8 L8.5 8.6" fill="none" stroke="#008080" stroke-width="1.1"/></svg></div>
<div class="num" style="left:0px;top:562px;width:60px;color:#111">28</div>
<div class="ln" style="left:70px;top:562px;width:640px"><span class="a" style="left:0px">| TD1 | TD3 |</span><svg class="abs" style="left:130px;top:4px" width="10" height="14" viewBox="0 0 10 14"><path d="M4.6 0.3 V12.6 M0.7 8.6 L4.6 12.8 L8.5 8.6" fill="none" stroke="#008080" stroke-width="1.1"/></svg></div>
<div class="num" style="left:0px;top:585px;width:60px;color:#111">29</div>
<div class="ln" style="left:70px;top:585px;width:640px"><span class="a" style="left:0px">| TD2 | TD4 |</span><svg class="abs" style="left:130px;top:4px" width="10" height="14" viewBox="0 0 10 14"><path d="M4.6 0.3 V12.6 M0.7 8.6 L4.6 12.8 L8.5 8.6" fill="none" stroke="#008080" stroke-width="1.1"/></svg></div>
<div class="num" style="left:0px;top:608px;width:60px;color:#111">30</div>
<div class="ln" style="left:70px;top:608px;width:640px"><span class="a" style="left:0px"><span class="bt">```</span></span><svg class="abs" style="left:30px;top:4px" width="10" height="14" viewBox="0 0 10 14"><path d="M4.6 0.3 V12.6 M0.7 8.6 L4.6 12.8 L8.5 8.6" fill="none" stroke="#008080" stroke-width="1.1"/></svg></div>
<div class="num" style="left:0px;top:631px;width:60px;color:#111">31</div>
<div class="ln" style="left:70px;top:631px;width:640px"><svg class="abs" style="left:0px;top:4px" width="10" height="14" viewBox="0 0 10 14"><path d="M4.6 0.3 V12.6 M0.7 8.6 L4.6 12.8 L8.5 8.6" fill="none" stroke="#008080" stroke-width="1.1"/></svg></div>
<div class="abs" style="left:229px;top:332px;width:3px;height:22px;background:#000"></div>
</div>
<div class="abs" style="left:697px;top:123px;width:13px;height:656px;background:#f0f0f0"></div>
<svg class="abs" style="left:699px;top:124px" width="10" height="8" viewBox="0 0 10 8"><path d="M4.5 0.8 L1.5 3.8 L4.5 6.8 M8 0.8 L5 3.8 L8 6.8" fill="none" stroke="#111" stroke-width="0.9"/></svg>
<div class="abs" style="left:696px;top:131.5px;width:14px;height:1.2px;background:#6b6b6b"></div>
<svg class="abs" style="left:700px;top:134px" width="9" height="7" viewBox="0 0 9 7" fill="#111"><rect x="0" y="0.5" width="1.2" height="1.2"/><rect x="2.2" y="0.5" width="5.5" height="1.2"/><rect x="0" y="2.9" width="1.2" height="1.2"/><rect x="2.2" y="2.9" width="5.5" height="1.2"/><rect x="0" y="5.3" width="1.2" height="1.2"/><rect x="2.2" y="5.3" width="5.5" height="1.2"/></svg>
<div class="abs" style="left:696px;top:141.5px;width:14px;height:1.5px;background:#6b6b6b"></div>
<svg class="abs" style="left:700.0px;top:147.5px" width="9" height="9" viewBox="0 0 9 9"><path d="M1 6 L4.5 2.5 L8 6" fill="none" stroke="#505050" stroke-width="1.7"/></svg>
<div class="abs" style="left:697px;top:197px;width:13px;height:364px;background:#cdcdcd"></div>
<svg class="abs" style="left:700.0px;top:766.0px" width="9" height="9" viewBox="0 0 9 9"><path d="M1 3 L4.5 6.5 L8 3" fill="none" stroke="#505050" stroke-width="1.7"/></svg>
<div class="abs" style="left:5px;top:779px;width:705px;height:17px;background:#f0f0f0"></div>
<svg class="abs" style="left:7.0px;top:783.0px" width="9" height="9" viewBox="0 0 9 9"><path d="M6 1 L2.5 4.5 L6 8" fill="none" stroke="#505050" stroke-width="1.7"/></svg>
<div class="abs" style="left:21px;top:780px;width:217px;height:15px;background:#cdcdcd"></div>
<svg class="abs" style="left:683.5px;top:783.0px" width="9" height="9" viewBox="0 0 9 9"><path d="M3 1 L6.5 4.5 L3 8" fill="none" stroke="#505050" stroke-width="1.7"/></svg>
<svg class="abs" style="left:699px;top:781px" width="12" height="12" viewBox="0 0 12 12" fill="#bdbdbd"><rect x="9" y="1" width="2" height="2"/><rect x="6" y="4" width="2" height="2"/><rect x="9" y="4" width="2" height="2"/><rect x="3" y="7" width="2" height="2"/><rect x="6" y="7" width="2" height="2"/><rect x="9" y="7" width="2" height="2"/><rect x="0" y="10" width="2" height="2"/><rect x="3" y="10" width="2" height="2"/><rect x="6" y="10" width="2" height="2"/><rect x="9" y="10" width="2" height="2"/></svg>
<div class="abs" style="left:3px;top:798px;width:707px;height:1px;background:#a5a5a5"></div>
<div class="abs" style="left:3px;top:799px;width:707px;height:1px;background:#fcfcfc"></div>
<span class="fit" style="left:7.4px;top:801.0px;font:12px 'Liberation Sans','Noto Sans CJK JP',sans-serif;line-height:16px;transform:scaleX(0.7040);color:#111;">アウトプット</span>
<svg class="abs" style="left:691px;top:805px" width="7" height="5" viewBox="0 0 7 5"><path d="M0.5 0.5 H6.5 L3.5 4 Z" fill="#000"/></svg>
<svg class="abs" style="left:705px;top:804px" width="6" height="7" viewBox="0 0 6 7"><path d="M0.5 0.8 L5.5 5.8 M5.5 0.8 L0.5 5.8" stroke="#000" stroke-width="1" fill="none"/></svg>
<div class="abs" style="left:3px;top:819px;width:707px;height:1.3px;background:#6b6b6b"></div>
<div class="abs" style="left:4px;top:820px;width:693px;height:204px;background:#fafafa"></div>
<svg class="abs" style="left:700.0px;top:826.0px" width="9" height="9" viewBox="0 0 9 9"><path d="M1 6 L4.5 2.5 L8 6" fill="none" stroke="#c3c3c3" stroke-width="1.7"/></svg>
<svg class="abs" style="left:700.0px;top:1009.5px" width="9" height="9" viewBox="0 0 9 9"><path d="M1 3 L4.5 6.5 L8 3" fill="none" stroke="#c3c3c3" stroke-width="1.7"/></svg>
<svg class="abs" style="left:8.0px;top:1027.0px" width="9" height="9" viewBox="0 0 9 9"><path d="M6 1 L2.5 4.5 L6 8" fill="none" stroke="#c3c3c3" stroke-width="1.7"/></svg>
<svg class="abs" style="left:683.5px;top:1027.0px" width="9" height="9" viewBox="0 0 9 9"><path d="M3 1 L6.5 4.5 L3 8" fill="none" stroke="#c3c3c3" stroke-width="1.7"/></svg>
<svg class="abs" style="left:699px;top:1026px" width="12" height="12" viewBox="0 0 12 12" fill="#bdbdbd"><rect x="9" y="1" width="2" height="2"/><rect x="6" y="4" width="2" height="2"/><rect x="9" y="4" width="2" height="2"/><rect x="3" y="7" width="2" height="2"/><rect x="6" y="7" width="2" height="2"/><rect x="9" y="7" width="2" height="2"/><rect x="0" y="10" width="2" height="2"/><rect x="3" y="10" width="2" height="2"/><rect x="6" y="10" width="2" height="2"/><rect x="9" y="10" width="2" height="2"/></svg>
</div>
</body></html>
